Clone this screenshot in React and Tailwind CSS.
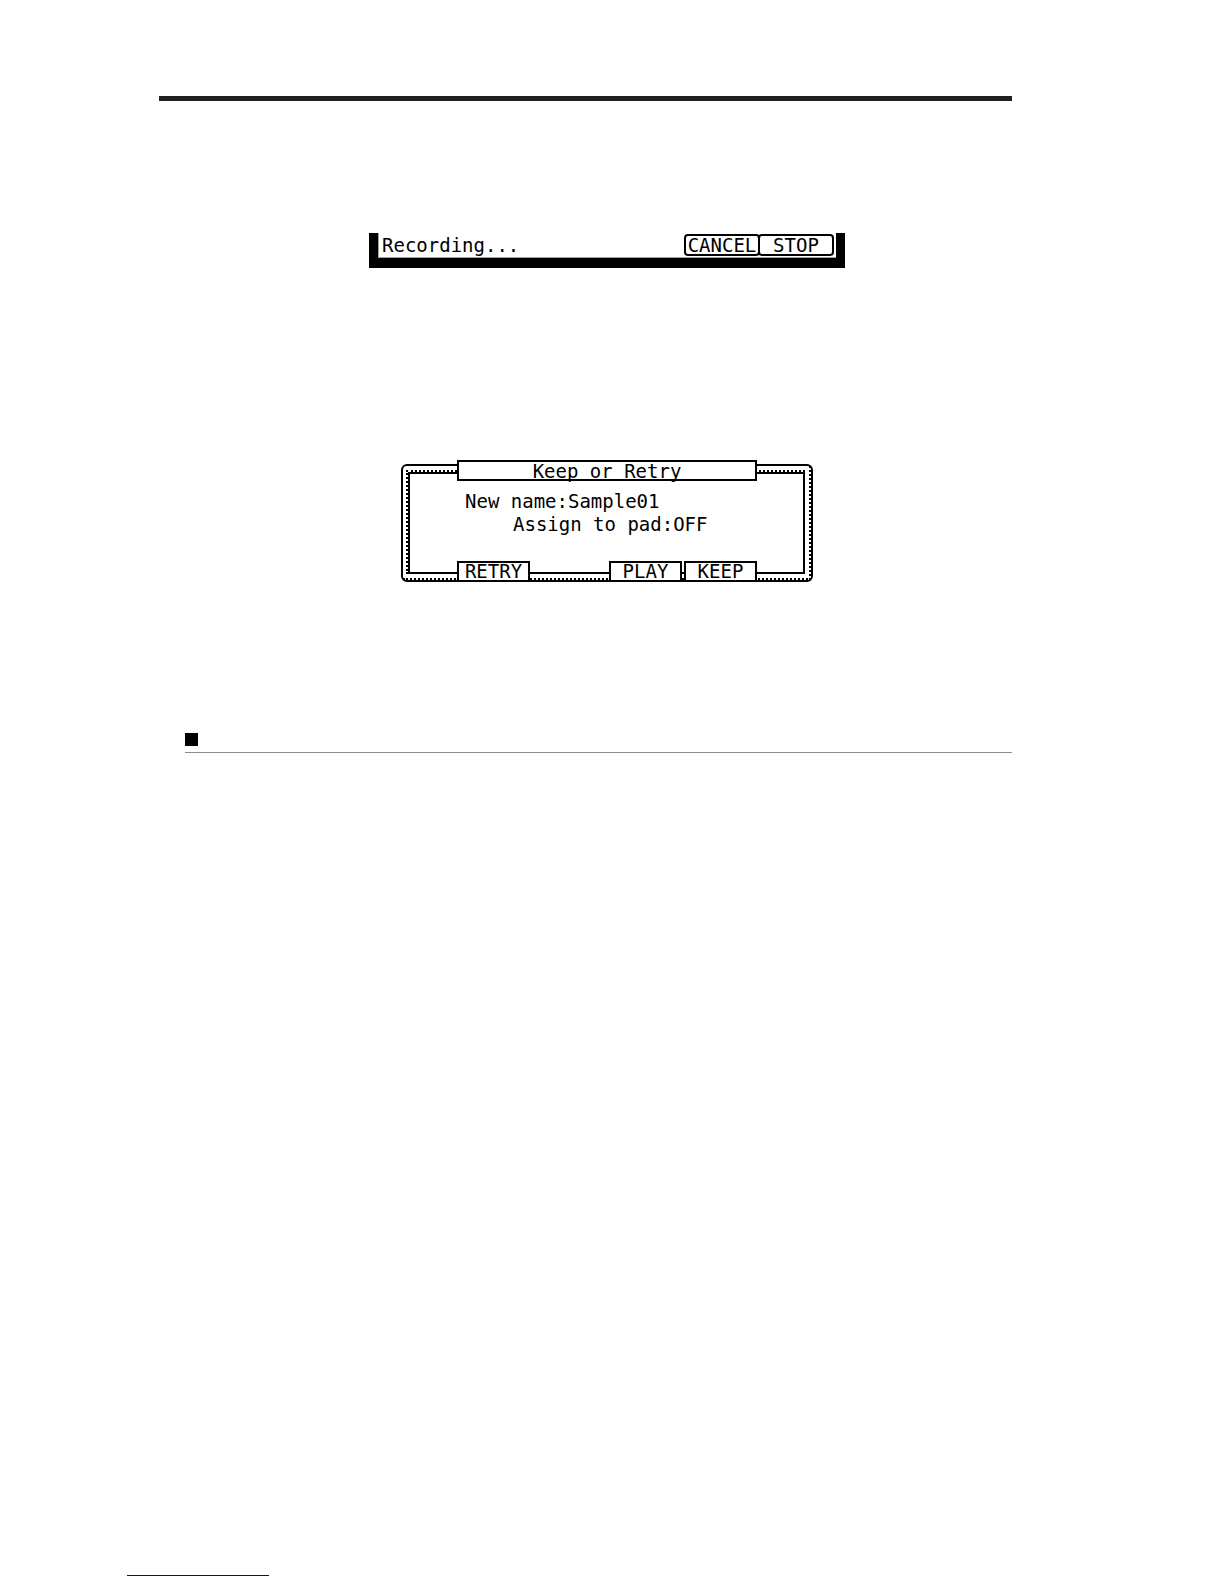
import React from 'react';

const SoftKey = ({ children, className = '' }) => (
    <button type="button" className={`flex justify-center border-2 border-black bg-white ${className}`}>
        {children}
    </button>
);

const RecordingBar = () => (
    <div className="mx-auto w-full max-w-[476px] border-x-[9px] border-b-[10px] border-black">
        <div className="flex justify-between h-[25px] border-l border-b border-neutral-400 pl-[3px] pr-0.5">
            <p className="leading-[25px]">Recording...</p>
            <div className="flex pt-px">
                <SoftKey className="w-[76px] h-[22px] rounded-sm leading-[19px]">CANCEL</SoftKey>
                <SoftKey className="w-[76px] h-[22px] rounded-sm leading-[19px] -ml-0.5">STOP</SoftKey>
            </div>
        </div>
    </div>
);

const KeepOrRetry = () => (
    <section className="relative mx-auto w-full max-w-[412px] h-[122px]">
        {/* double frame with a dotted shadow edge */}
        <div className="absolute inset-x-0 top-1 bottom-0 rounded-md border-2 border-black">
            <div className="h-full border-r-2 border-b-2 border-dotted border-black pl-[3px] pt-1 pr-1 pb-1">
                <div className="h-full border-l-2 border-t-2 border-dotted border-black">
                    <div className="h-full border-2 border-black" />
                </div>
            </div>
        </div>

        <div className="relative flex flex-col h-full px-14">
            <h2 className="h-[21px] border-2 border-black bg-white text-center leading-[18px]">Keep or Retry</h2>
            <div className="flex flex-col pl-2 pt-[9px] whitespace-nowrap">
                <p className="leading-[23px]">New name:Sample01</p>
                <p className="pl-12 leading-[23px]">Assign to pad:OFF</p>
            </div>
            <div className="flex mt-auto gap-0.5">
                <SoftKey className="w-[73px] h-[21px] leading-4 mr-auto">RETRY</SoftKey>
                <SoftKey className="w-[73px] h-[21px] leading-4">PLAY</SoftKey>
                <SoftKey className="w-[73px] h-[21px] leading-4">KEEP</SoftKey>
            </div>
        </div>
    </section>
);

const App = () => {
    return (
        <main className="min-h-screen flex flex-col bg-white font-['DejaVu_Sans_Mono',monospace] text-[19px] text-black">
            <div className="flex flex-col pt-24 pl-[159px] pr-[212px]">
                <div className="h-[5px] bg-[#231f20]" />
                <div className="pt-[132px] pl-[43px]">
                    <RecordingBar />
                </div>
                <div className="pt-48 pl-[43px]">
                    <KeepOrRetry />
                </div>
                <div className="ml-[26px] mt-[151px] border-b border-[#8c8c8c] pb-1.5">
                    <div className="size-[13px] bg-black" />
                </div>
            </div>
            <div className="mt-auto mb-2 ml-[127px] w-[142px] h-px bg-[#0a0a80]" />
        </main>
    );
};

export default App;
